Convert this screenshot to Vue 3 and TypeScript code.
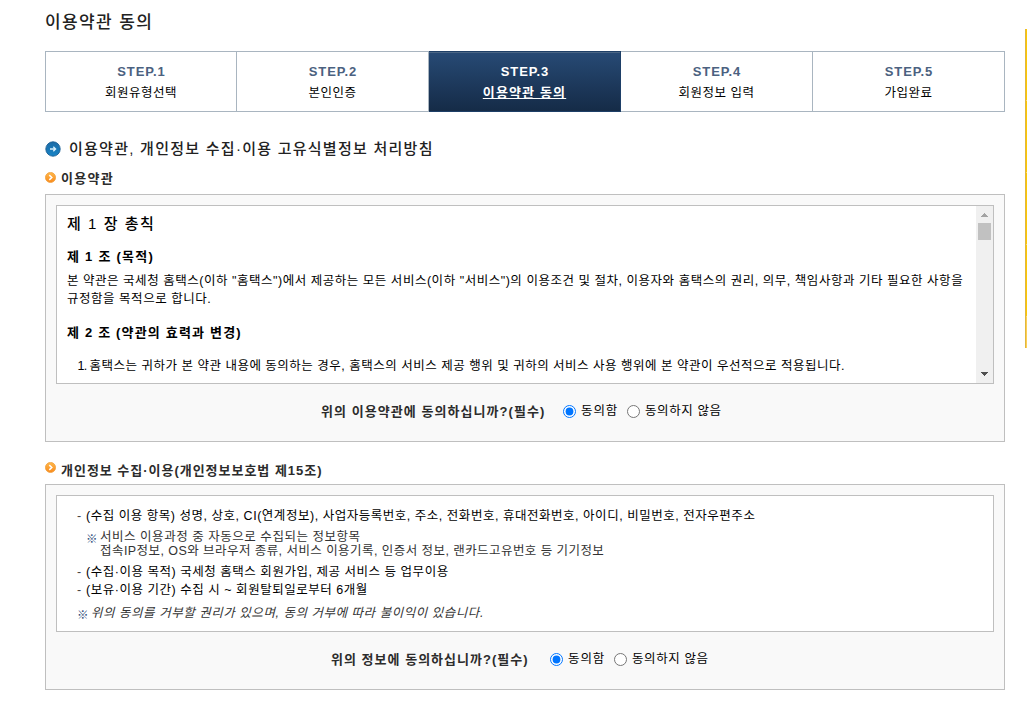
<script setup lang="ts">
import { ref } from 'vue'

interface Step {
  no: string
  label: string
  active?: boolean
}

const steps: Step[] = [
  { no: 'STEP.1', label: '회원유형선택' },
  { no: 'STEP.2', label: '본인인증' },
  { no: 'STEP.3', label: '이용약관 동의', active: true },
  { no: 'STEP.4', label: '회원정보 입력' },
  { no: 'STEP.5', label: '가입완료' },
]

const termsAgree = ref<string>('yes')
const privacyAgree = ref<string>('yes')
</script>

<template>
  <div class="page">
    <main class="content">
      <h1 class="title">이용약관 동의</h1>

      <ol class="steps">
        <li v-for="s in steps" :key="s.no" class="step" :class="{ active: s.active }">
          <span class="step-no">{{ s.no }}</span>
          <span class="step-label">{{ s.label }}</span>
        </li>
      </ol>

      <h2 class="section-title">
        <svg class="ico-arrow" width="16" height="16" viewBox="0 0 16 16">
          <defs>
            <linearGradient id="blue" x1="0" y1="0" x2="0" y2="1">
              <stop offset="0" stop-color="#1d6ba6" />
              <stop offset="1" stop-color="#1784c6" />
            </linearGradient>
          </defs>
          <circle cx="8" cy="8" r="7.2" fill="url(#blue)" stroke="#1a5f94" stroke-width="0.9" />
          <path d="M5 8H10.4M8.3 5.8L10.6 8L8.3 10.2" fill="none" stroke="#d9f0fc" stroke-width="1.3" />
        </svg>
        <span>이용약관, 개인정보 수집·이용 고유식별정보 처리방침</span>
      </h2>

      <h3 class="sub-title first">
        <svg class="ico-chevron" width="11" height="11" viewBox="0 0 11 11">
          <defs>
            <linearGradient id="orange" x1="0" y1="0" x2="0" y2="1">
              <stop offset="0" stop-color="#ffb84a" />
              <stop offset="1" stop-color="#f98a1c" />
            </linearGradient>
          </defs>
          <circle cx="5.5" cy="5.5" r="5.1" fill="url(#orange)" stroke="#ee9a32" stroke-width="0.7" />
          <path d="M4.3 3.1L6.8 5.5L4.3 7.9" fill="none" stroke="#fff" stroke-width="1.5" />
        </svg>
        <span class="t-terms">이용약관</span>
      </h3>

      <section class="panel panel-terms">
        <div class="scroller">
          <div class="terms">
            <h4 class="chapter">제 1 장 총칙</h4>
            <h5 class="article a1">제 1 조 (목적)</h5>
            <p class="para">본 약관은 국세청 홈택스(이하 "홈택스")에서 제공하는 모든 서비스(이하 "서비스")의 이용조건 및 절차, 이용자와 홈택스의 권리, 의무, 책임사항과 기타 필요한 사항을<br />규정함을 목적으로 합니다.</p>
            <h5 class="article a2">제 2 조 (약관의 효력과 변경)</h5>
            <div class="item"><span class="num">1.</span><span class="item-text">홈택스는 귀하가 본 약관 내용에 동의하는 경우, 홈택스의 서비스 제공 행위 및 귀하의 서비스 사용 행위에 본 약관이 우선적으로 적용됩니다.</span></div>
          </div>
          <div class="scrollbar">
            <svg class="arrow-up" width="7" height="4" viewBox="0 0 7 4" shape-rendering="crispEdges"><path d="M3 0H4V1H5V2H6V3H7V4H0V3H1V2H2V1H3Z" fill="#a3a3a3" /></svg>
            <div class="thumb"></div>
            <svg class="arrow-down" width="7" height="4" viewBox="0 0 7 4" shape-rendering="crispEdges"><path d="M0 0H7V1H6V2H5V3H4V4H3V3H2V2H1V1H0Z" fill="#505050" /></svg>
          </div>
        </div>
        <div class="question q-terms">
          <strong>위의 이용약관에 동의하십니까?(필수)</strong>
          <label class="yes"><input v-model="termsAgree" type="radio" name="terms" value="yes" /><span>동의함</span></label>
          <label class="no"><input v-model="termsAgree" type="radio" name="terms" value="no" /><span>동의하지 않음</span></label>
        </div>
      </section>

      <h3 class="sub-title second">
        <svg class="ico-chevron" width="11" height="11" viewBox="0 0 11 11">
          <circle cx="5.5" cy="5.5" r="5.1" fill="url(#orange)" stroke="#ee9a32" stroke-width="0.7" />
          <path d="M4.3 3.1L6.8 5.5L4.3 7.9" fill="none" stroke="#fff" stroke-width="1.5" />
        </svg>
        <span class="t-privacy">개인정보 수집·이용(개인정보보호법 제15조)</span>
      </h3>

      <section class="panel panel-privacy">
        <div class="privacy">
          <p class="dash">(수집 이용 항목) 성명, 상호, CI(연계정보), 사업자등록번호, 주소, 전화번호, 휴대전화번호, 아이디, 비밀번호, 전자우편주소</p>
          <div class="note">
            <span class="mark">※</span>
            <p><span class="n1">서비스 이용과정 중 자동으로 수집되는 정보항목</span><br /><span class="n2">접속IP정보, OS와 브라우저 종류, 서비스 이용기록, 인증서 정보, 랜카드고유번호 등 기기정보</span></p>
          </div>
          <p class="dash">(수집·이용 목적) 국세청 홈택스 회원가입, 제공 서비스 등 업무이용</p>
          <p class="dash">(보유·이용 기간) 수집 시 ~ 회원탈퇴일로부터 6개월</p>
          <div class="refuse">
            <span class="mark">※</span>
            <em>위의 동의를 거부할 권리가 있으며, 동의 거부에 따라 불이익이 있습니다.</em>
          </div>
        </div>
        <div class="question q-privacy">
          <strong>위의 정보에 동의하십니까?(필수)</strong>
          <label class="yes"><input v-model="privacyAgree" type="radio" name="privacy" value="yes" /><span>동의함</span></label>
          <label class="no"><input v-model="privacyAgree" type="radio" name="privacy" value="no" /><span>동의하지 않음</span></label>
        </div>
      </section>
    </main>

    <aside class="side-banner">
      <i></i><i></i><i></i><i></i><i class="last"></i>
    </aside>
  </div>
</template>

<style>
body {
  margin: 0;
  background: #fff;
}
</style>

<style scoped>
.page {
  display: flex;
  align-items: flex-start;
  width: 1027px;
  height: 702px;
  overflow: hidden;
  font-family: "Liberation Sans", "Noto Sans CJK KR", sans-serif;
  font-size: 12.5px;
  letter-spacing: 0.525px;
  color: #000;
  white-space: nowrap;
}
.page *,
.page {
  box-sizing: border-box;
}
h1, h2, h3, h4, h5, p, ol {
  margin: 0;
  padding: 0;
}
.content {
  width: 960px;
  margin-left: 45px;
  flex: none;
}
.title {
  height: 51px;
  padding-top: 11px;
  line-height: 24px;
  font-size: 17px;
  font-weight: 500;
  letter-spacing: 1.4px;
  color: #222;
}
.steps {
  display: flex;
  height: 61px;
  list-style: none;
}
.step {
  width: 192px;
  padding-top: 10px;
  border: solid #a9b5c0;
  border-width: 1px 1px 1px 0;
  display: flex;
  flex-direction: column;
  align-items: center;
  line-height: 20px;
}
.step:first-child {
  border-left-width: 1px;
}
.step-no {
  height: 21px;
  padding-left: 1px;
  font-size: 13px;
  font-weight: 700;
  letter-spacing: 0.9px;
  color: #4b6180;
}
.step.active {
  border-color: #1e3f67;
  background: linear-gradient(#274a75, #152b47);
  box-shadow: inset 0 1px 0 #4b6685;
  color: #fff;
}
.active .step-no {
  color: #fff;
}
.active .step-label {
  font-size: 13px;
  font-weight: 700;
  letter-spacing: 1.15px;
  text-decoration: underline;
}
.section-title {
  display: flex;
  align-items: center;
  height: 24px;
  margin-top: 25px;
  line-height: 24px;
  font-size: 15px;
  font-weight: 500;
  letter-spacing: 1.26px;
  color: #222;
}
.section-title span {
  height: 24px;
}
.ico-arrow {
  margin-right: 8px;
}
.sub-title {
  display: flex;
  height: 20px;
  line-height: 22px;
  font-size: 13px;
  font-weight: 700;
  color: #2c2c2c;
}
.sub-title.first {
  margin-top: 7px;
  margin-bottom: 6px;
}
.sub-title.second {
  margin-top: 18px;
  margin-bottom: 4px;
}
.ico-chevron {
  margin: 4px 5px 0 0;
}
.second .ico-chevron {
  margin-top: 2px;
}
.t-terms {
  letter-spacing: 1.3px;
}
.t-privacy {
  letter-spacing: 0.98px;
}
.panel {
  border: 1px solid #bfbfbf;
  background: #f9f9f9;
  padding: 10px;
}
.panel-terms {
  height: 248px;
}
.panel-privacy {
  height: 206px;
}
.scroller {
  display: flex;
  height: 179px;
  border: 1px solid #bfbfbf;
  background: #fff;
}
.terms {
  flex: 1;
  padding: 7px 0 0 10px;
}
.chapter {
  height: 22px;
  line-height: 22px;
  font-size: 15px;
  font-weight: 500;
  letter-spacing: 1.55px;
}
.article {
  height: 20px;
  line-height: 20px;
  font-size: 13px;
  font-weight: 700;
}
.a1 {
  margin-top: 12px;
  letter-spacing: 1.25px;
}
.a2 {
  margin-top: 15px;
  letter-spacing: 1.18px;
}
.para {
  margin-top: 5px;
  line-height: 18px;
}
.item {
  display: flex;
  margin-top: 14px;
  line-height: 18px;
}
.num {
  width: 22.5px;
  padding-left: 10.5px;
  letter-spacing: -0.8px;
}
.item-text {
  letter-spacing: 0.5px;
}
.scrollbar {
  width: 17px;
  background: #f0f0f0;
  display: flex;
  flex-direction: column;
}
.arrow-up {
  margin: 7px 0 6px 5px;
}
.thumb {
  width: 13px;
  height: 17px;
  margin-left: 2px;
  background: #c1c1c1;
}
.arrow-down {
  margin: auto 0 7px 5px;
}
.question {
  display: flex;
  height: 20px;
  line-height: 22px;
}
.q-terms {
  margin: 17px 0 0 265px;
}
.q-privacy {
  margin: 17px 0 0 275px;
}
.question strong {
  font-size: 13px;
  color: #2c2c2c;
}
.q-terms strong {
  width: 242px;
  letter-spacing: 1.06px;
}
.q-privacy strong {
  width: 219px;
  letter-spacing: 1.02px;
}
.question label {
  display: flex;
}
.question input {
  width: 13px;
  height: 13px;
  margin: 4px 5px 0 0;
}
.question label span {
  line-height: 21px;
}
.yes {
  width: 64px;
  letter-spacing: 0.9px;
}
.no {
  letter-spacing: 0.6px;
}
.privacy {
  height: 137px;
  padding: 11px 0 0 20px;
  border: 1px solid #bfbfbf;
  background: #fff;
}
.dash {
  height: 18px;
  line-height: 18px;
}
.dash::before {
  content: "-";
  display: inline-block;
  width: 9px;
  letter-spacing: 0;
  color: #444;
}
.note {
  display: flex;
  height: 38px;
  padding: 5px 0 0 9px;
  line-height: 14px;
  color: #333;
}
.mark {
  width: 14px;
  flex: none;
  letter-spacing: 0;
  font-size: 11.5px;
  color: #2f4f7c;
}
.note .mark {
  padding-top: 2px;
}
.n1 {
  letter-spacing: 0.53px;
}
.n2 {
  letter-spacing: 0.44px;
}
.refuse {
  display: flex;
  margin-top: 5px;
  line-height: 18px;
  letter-spacing: 0.53px;
  color: #333;
}
.refuse .mark {
  padding-top: 2px;
}
.side-banner {
  width: 2px;
  height: 319px;
  margin: 29px 0 0 20px;
  flex: none;
  display: flex;
  flex-direction: column;
  border-left: 1px solid #dfb73f;
  background: #ffc800;
}
.side-banner i {
  height: 72px;
  flex: none;
  border-bottom: 1px solid #ffdc6a;
}
.side-banner i.last {
  flex: 1;
  border: 0;
  background: #ffcf52;
}
</style>
